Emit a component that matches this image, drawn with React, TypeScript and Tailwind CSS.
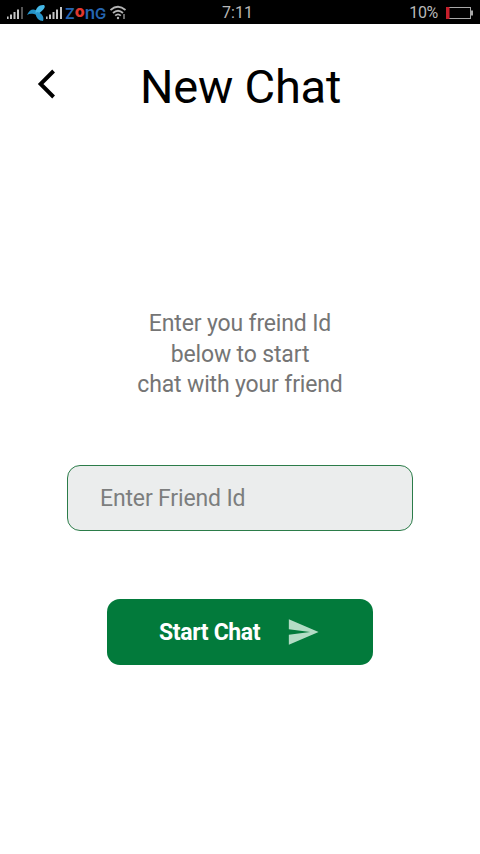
import React from 'react';
import { MdSend } from 'react-icons/md';

const SignalBars: React.FC<{ dimLast?: boolean }> = ({ dimLast }) => (
  <svg width="17" height="12" viewBox="0 0 17 12" fill="#c4c4c4" className="shrink-0">
    <rect x="0" y="9.5" width="1.6" height="2.5" />
    <rect x="3" y="7.5" width="2" height="4.5" />
    <rect x="6.5" y="5" width="2" height="7" />
    <rect x="10" y="2.5" width="2" height="9.5" />
    <rect x="14" y="0" width="2" height="12" fill={dimLast ? '#555555' : '#c4c4c4'} />
  </svg>
);

const CarrierLogo: React.FC = () => (
  <svg width="21" height="18" viewBox="0 0 21 18" className="shrink-0">
    <path d="M11 8C7 4 3 5 0 11C3 9 6 9.500 10 11Z" fill="#2392c8" />
    <path d="M8.500 9C8.500 4 12 0.500 17 1C19 2.500 17 6 11 10Z" fill="#45b8e6" />
    <path d="M10 8C15 9 17.500 13 16 17C12 17 9 14 8.500 9.500Z" fill="#2796cc" />
  </svg>
);

const WifiIcon: React.FC = () => (
  <svg width="17" height="15" viewBox="0 0 17 15" fill="none" stroke="#b5b5b5" strokeWidth="1.8" className="shrink-0">
    <path d="M0.5 5Q8 -1.5 15.5 5" />
    <path d="M3 8Q8 3.5 13 8" />
    <path d="M5.2 10.7Q8 8 10.8 10.7" />
    <circle cx="8" cy="13" r="1.2" fill="#b5b5b5" stroke="none" />
    <path d="M14 9V14" stroke="#777777" />
  </svg>
);

const StatusBar: React.FC = () => (
  <div className="grid h-6 grid-cols-3 items-center bg-black text-[16px] text-[#b8b8b8]">
    <div className="flex items-center pl-[7px]">
      <SignalBars dimLast />
      <span className="ml-[3px] flex">
        <CarrierLogo />
      </span>
      <span className="-ml-[2px] flex">
        <SignalBars />
      </span>
      <span className="ml-[2px] flex h-4 w-[43px] items-end font-['Inter',sans-serif] text-[15px] leading-none font-semibold text-[#2565b0]">
        <span>Z</span>
        <span className="mb-[2px] text-[16px] font-extrabold text-[#e0382f]">o</span>
        <span className="text-[17px] leading-[15px]">n</span>
        <span>G</span>
      </span>
      <span className="ml-[2px] flex">
        <WifiIcon />
      </span>
    </div>
    <span className="pt-px pr-[5px] text-center">7:11</span>
    <div className="flex items-center justify-end gap-2 pr-[7px]">
      <span className="pt-px tracking-[-0.3px]">10%</span>
      <svg width="27" height="12" viewBox="0 0 27 12">
        <rect x="0.5" y="0.5" width="24" height="11" fill="none" stroke="#a8a8a8" />
        <rect x="0" y="0" width="3.5" height="12" fill="#c71f2b" />
        <rect x="25" y="3.5" width="2" height="5" fill="#a8a8a8" />
      </svg>
    </div>
  </div>
);

const App: React.FC = () => {
  return (
    <div className="flex h-[854px] w-[480px] flex-col overflow-hidden bg-white font-['Roboto',sans-serif]">
      <StatusBar />

      {/* HEADER */}
      <header className="grid h-[126px] grid-cols-[1fr_auto_1fr] items-center">
        <button aria-label="Back" className="-mt-[6px] pl-[36px]">
          <svg width="20" height="30" viewBox="0 0 20 30" fill="none" stroke="#000000" strokeWidth="3.9">
            <path d="M17.6 2L4.6 15L17.6 28" />
          </svg>
        </button>
        <h1 className="-mt-[2px] pl-px text-[47px] leading-none tracking-[-0.2px] text-black">New Chat</h1>
      </header>

      {/* FORM */}
      <main className="flex flex-col items-center pt-[159px]">
        <p className="text-center text-[23px] leading-[30.5px] tracking-[-0.15px] text-[#757575]">
          Enter you freind Id
          <br />
          below to start
          <br />
          chat with your friend
        </p>

        <input
          type="text"
          placeholder="Enter Friend Id"
          className="mt-[64.5px] h-[66px] w-[346px] rounded-[13px] border border-[#2b7c49] bg-[#ebeded] px-8 pt-px text-[23px] tracking-[-0.15px] text-black outline-none placeholder:text-[#7c7e7e]"
        />

        <button className="mt-[68px] flex h-[66px] w-[266px] items-center rounded-[13px] bg-[#027a3b] pl-[52px] text-[23px] font-bold tracking-[-0.35px] text-white">
          <span className="w-[127px] pt-[3px] text-left">Start Chat</span>
          <MdSend size={34} className="text-[#b3dcc5]" />
        </button>
      </main>
    </div>
  );
};

export default App;
